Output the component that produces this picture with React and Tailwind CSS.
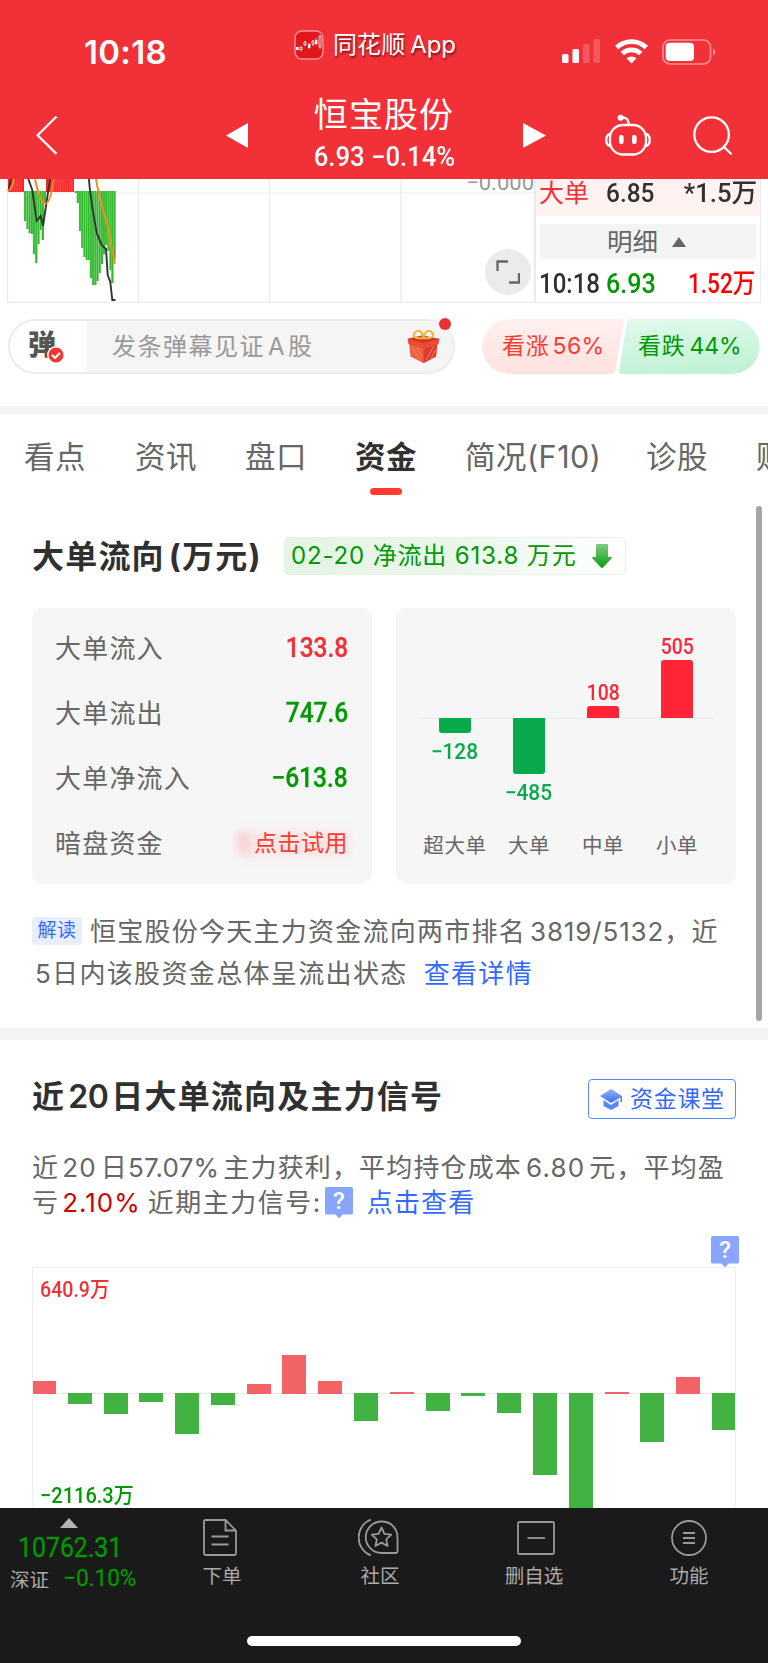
import { Fragment } from "react";

const ZERO_Y = 12;

// [x, bottom] of each histogram column, y is relative to the panel top
const MACD = [
  [24, 42], [26.3, 50], [28.5, 54], [30.7, 55], [32.9, 75], [35.1, 84],
  [37.3, 65], [39.5, 51], [41.6, 61], [43.6, 24],
  [74.6, 14], [76.7, 24], [78.9, 52], [81.1, 69], [83.3, 78], [85.5, 81],
  [87.6, 81], [89.8, 99], [92, 106], [94.2, 106], [96.3, 102], [98.5, 94],
  [100.7, 85], [102.8, 75], [105, 66], [107.2, 72], [109.3, 91], [111.2, 104],
  [113.3, 81],
];

const TABS = [
  { label: "看点", width: "w-[111px]" },
  { label: "资讯", width: "w-[110px]" },
  { label: "盘口", width: "w-[110px]" },
  { label: "资金", width: "w-[110px]", active: true },
  { label: "简况(F10)", width: "w-[181px]" },
  { label: "诊股", width: "w-[110px]" },
  { label: "财务", width: "w-[110px]" },
];

const FLOWS = [
  { label: "大单流入", value: "133.8", color: "text-[#f23037]" },
  { label: "大单流出", value: "747.6", color: "text-[#009900]" },
  { label: "大单净流入", value: "−613.8", color: "text-[#009900]" },
];

const ORDERS = [
  { label: "超大单", value: -128, height: 15 },
  { label: "大单", value: -485, height: 56 },
  { label: "中单", value: 108, height: 12 },
  { label: "小单", value: 505, height: 58 },
];

// signed bar heights in px, oldest day first
const DAYS = [
  13, -10, -20, -8, -40, -10.5, 10, 39, 13, -27, 2, -16.5, -1.5, -18.5,
  -80.5, -130, 2, -47.5, 17, -36,
];

function Num({ children, className = "" }) {
  return (
    <span
      className={`inline-block font-['Roboto','Noto_Sans_CJK_SC',sans-serif] font-medium whitespace-nowrap ${className}`}>
      {children}
    </span>
  );
}

function StatusBar() {
  return (
    <div className="flex h-[91px] items-center pt-[12px]">
      <span className="ml-[84px] w-[210px] text-[33px] font-semibold leading-[40px] tracking-[0.3px]">
        10:18
      </span>
      <div className="-mt-[13px] flex w-[268px] items-center">
        <svg width="30" height="30" viewBox="0 0 30 30" fill="none">
          <rect x="1" y="1" width="28" height="28" rx="7" fill="#e0181c" stroke="#fa9296" strokeWidth="1.4" />
          <path d="M7 16v5M11 11v5M15 13v6M19 10v6M22 8v7M26 5v14" stroke="#fff" strokeWidth="0.7" />
          <path d="M2 17h2.600v3H2zM14 14h2.400v4H14zM21 10h2.400v4H21z" fill="#fff" />
          <path d="M6 17h2v3H6zM10 12h2v3H10zM18 11h2v3H18zM25 6h2v11H25z" stroke="#fff" strokeWidth="0.8" fill="#e0181c" />
        </svg>
        <span className="ml-[9px] text-[24px] leading-[32px] tracking-[0.1px] whitespace-nowrap [text-shadow:1px_2px_2px_rgba(60,0,0,0.6)]">
          同花顺<span className="ml-[5px] tracking-[-0.200px]">App</span>
        </span>
      </div>
      <svg width="39" height="25" viewBox="0 0 39 25" fill="#fff">
        <rect x="0" y="15" width="6.500" height="9" rx="1.500" />
        <rect x="10.500" y="10" width="6.500" height="14" rx="1.500" />
        <rect x="21" y="5" width="6.500" height="19" rx="1.500" opacity="0.2" />
        <rect x="31.500" y="0" width="6.500" height="24" rx="1.500" opacity="0.2" />
      </svg>
      <svg className="ml-[14px]" width="33" height="25" viewBox="0 0 33 25" fill="none" stroke="#fff" strokeWidth="4.800">
        <path d="M1.700 8.500a21.500 21.500 0 0 1 29.600 0" />
        <path d="M7.200 14.600a13.400 13.400 0 0 1 18.600 0" />
        <path d="M16.500 24.500l-5-5.200a7.500 7.500 0 0 1 10 0z" fill="#fff" stroke="none" />
      </svg>
      <svg className="ml-[14px]" width="55" height="26" viewBox="0 0 55 26" fill="none">
        <rect x="1" y="1" width="47.500" height="24" rx="7" stroke="#f98e92" strokeWidth="1.700" />
        <rect x="3.700" y="3.800" width="28.300" height="18.300" rx="4" fill="#fff" />
        <path d="M51 9.500c3 1.500 3 5.500 0 7z" fill="#f98e92" />
      </svg>
    </div>
  );
}

function NavBar() {
  return (
    <div className="flex h-[88px] items-center pl-[36px]">
      <svg width="22" height="40" viewBox="0 0 22 40" fill="none" stroke="#fff" strokeWidth="2.200">
        <path d="M20.500 1.500L1.600 20.200l18.900 18.700" />
      </svg>
      <svg className="ml-[168px]" width="22" height="25" viewBox="0 0 22 25" fill="#fff">
        <path d="M22 0v25L0 12.500z" />
      </svg>
      <div className="flex w-[275px] flex-col items-center">
        <div className="mr-[3px] text-[34px] leading-[44px] tracking-[1.100px]">恒宝股份</div>
        <Num className="mr-[3px] text-[27px] leading-[40px] scale-x-[0.950]">6.93 −0.14%</Num>
      </div>
      <svg width="23" height="25" viewBox="0 0 23 25" fill="#fff">
        <path d="M0 0v25l23-12.500z" />
      </svg>
      <svg className="ml-[59px]" width="46" height="43" viewBox="0 0 46 43" fill="none" stroke="#fff" strokeWidth="2.300">
        <rect x="5" y="11" width="36" height="29.500" rx="13" />
        <path d="M5 20c-5 1-5 11 0 12M41 20c5 1 5 11 0 12" />
        <path d="M16 3.800c4.500-.8 7.500 1 7.700 6.500" />
        <circle cx="15.600" cy="3.800" r="3" fill="#fff" stroke="none" />
        <rect x="14" y="21" width="4.600" height="9" rx="2" fill="#fff" stroke="none" />
        <rect x="27" y="21" width="4.600" height="9" rx="2" fill="#fff" stroke="none" />
      </svg>
      <svg className="ml-[42px]" width="40" height="41" viewBox="0 0 40 41" fill="none" stroke="#fff" strokeWidth="2.300">
        <circle cx="18.600" cy="19.600" r="17.300" />
        <path d="M31 32l7.500 7.300" />
      </svg>
    </div>
  );
}

function MinuteChart() {
  return (
    <div className="relative h-[124px] w-[534px] overflow-hidden">
      <svg width="534" height="124" viewBox="0 0 534 124" fill="none">
        <path d="M7.500 0v123M138.500 0v123M269.500 0v123M401 0v123M7 14H534M7 123.300H534" stroke="#ebebeb" strokeWidth="1.200" />
        <rect x="8" y="0" width="16" height="13" fill="#ff2222" />
        <rect x="46" y="0" width="28" height="13" fill="#ff2222" />
        <path d="M10 0v13M12.300 0v13M14.600 0v13M17 0v13M19.300 0v13M21.600 0v13M49 0v13M51.300 0v13M53.600 0v13M56 0v13M58.300 0v13M60.600 0v13M63 0v13M65.300 0v13M67.600 0v13M70 0v13M72 0v13" stroke="#fff" strokeWidth="0.500" opacity="0.450" />
        {MACD.map(([x, y]) => (
          <Fragment key={x}>
            <rect x={x} y={ZERO_Y} width="2.300" height={y - ZERO_Y} fill="#2fb82c" />
            <path d={`M${x} ${ZERO_Y}V${y}`} stroke="#fff" strokeWidth="0.500" opacity="0.400" />
          </Fragment>
        ))}
        <path d="M8.500 12L11 0M28.300 0L32.300 11L36.700 42L40.700 37L43 47L50 0M89 0C90 18 94 38 96.700 54L101.700 66L106 70L107.700 96L110.300 103L112.300 121H115.500" stroke="#333" strokeWidth="1.900" />
        <path d="M8 12c4-2 5-8 6-12M35 0c2 10 6 24 10 24.500S52 13 54 0M96 0c2 14 7 30 10 41s6 30 9 44" stroke="#ff861f" strokeWidth="1.900" />
      </svg>
      <Num className="absolute right-0 -top-[9px] w-[68px] text-right text-[22px] leading-[26px] font-normal text-[#999]">
        −0.000
      </Num>
      <div className="absolute top-[70px] left-[485px] flex size-[46px] items-center justify-center rounded-full bg-[#ebebeb]">
        <svg width="24" height="24" viewBox="0 0 24 24" fill="none" stroke="#666" strokeWidth="2.300">
          <path d="M1.500 11V1.500H12M23 13v9.500H13" />
        </svg>
      </div>
    </div>
  );
}

function TradeList() {
  return (
    <div className="h-[124px] w-[227px] border-r border-b border-l-2 border-[#ebebeb]">
      <div className="flex h-[37px] items-center bg-[#fff3f2] pb-[10px] pl-[3px] text-[26px] leading-[26px]">
        <span className="w-[67px] text-[25px] text-[#f23037]">大单</span>
        <Num className="w-[60px] origin-left scale-x-[0.940] text-[#303030]">6.85</Num>
        <Num className="ml-auto mr-[3px] origin-right scale-x-[0.990] text-[#303030]">*1.5万</Num>
      </div>
      <div className="mx-[4px] mt-[8px] flex h-[35px] items-center justify-center bg-[#f4f4f4] pr-[3px] text-[25.500px] leading-[30px] text-[#666]">
        明细
        <svg className="ml-[14px]" width="14" height="10" viewBox="0 0 14 10" fill="#666">
          <path d="M7 0l7 10H0z" />
        </svg>
      </div>
      <div className="mt-[8px] flex h-[34px] items-center pl-[3px] text-[27px] leading-[34px]">
        <Num className="w-[67px] origin-left scale-x-[0.890] text-[#303030]">10:18</Num>
        <Num className="w-[60px] origin-left scale-x-[0.930] text-[#009900]">6.93</Num>
        <Num className="ml-auto mr-[4px] origin-right scale-x-[0.840] text-[#ff0000]">1.52万</Num>
      </div>
    </div>
  );
}

function Gift() {
  return (
    <svg width="33" height="35" viewBox="0 0 33 35" fill="none">
      <path d="M2 13.500l14.500 4.500 14-4.500-1.500 14-12.500 6.500L3.500 27.500z" fill="#f0603f" />
      <path d="M16.500 18l14-4.500-1.500 14-12.500 6.500z" fill="#dd3b2f" />
      <path d="M5 18l8 13M10 19l6 9M19 31l8-14M24 29.500l5-9" stroke="#f98a64" strokeWidth="0.900" />
      <path d="M.5 10L15 6.500 32.500 10l-1 5-15 4.500-15-4.500z" fill="#ec4c31" />
      <path d="M.5 10L15 6.500 32.500 10l-16 4z" fill="#cf3727" />
      <path d="M16 9C7 10 5 7 8 3.500 11 0 16 2 16 9zM17 9c9 1 11-2 8-5.500C22 0 17 2 17 9z" stroke="#f4b13b" strokeWidth="2" />
    </svg>
  );
}

function DanmakuBar() {
  return (
    <div className="flex h-[103px] pt-[16px] pl-[8px]">
      <div className="relative flex h-[55px] w-[447px] items-center rounded-full border-2 border-[#ececec] bg-[#f5f5f5]">
        <div className="relative h-full w-[77px] rounded-l-full bg-white">
          <span className="absolute top-[7px] left-[18px] text-[28px] leading-[34px] font-black text-[#555]">
            弹
          </span>
          <svg className="absolute top-[25px] left-[37px]" width="18" height="18" viewBox="0 0 18 18" fill="none">
            <circle cx="9" cy="9" r="8.200" fill="#f9332e" stroke="#fff" strokeWidth="1.400" />
            <path d="M5 9l3 3 5-5.200" stroke="#fff" strokeWidth="2.200" />
          </svg>
        </div>
        <span className="ml-[25px] text-[24px] leading-[34px] tracking-[1.500px] text-[#999] whitespace-nowrap">
          发条弹幕见证<span className="mr-[2px] ml-[3px]">A</span>股
        </span>
        <div className="ml-auto mr-[13px]">
          <Gift />
        </div>
        <span className="absolute -top-[3px] right-[2px] size-[12px] rounded-full bg-[#eb2f33]" />
      </div>
      <div className="relative ml-[27px] flex h-[55px] w-[278px] items-center text-[23px] tracking-[0.800px]">
        <svg className="absolute inset-0" width="278" height="55" viewBox="0 0 279 55">
          <defs>
            <linearGradient id="up" x1="0" y1="0" x2="0" y2="1">
              <stop offset="0" stopColor="#fff1f0" />
              <stop offset="1" stopColor="#ffe2de" />
            </linearGradient>
            <linearGradient id="down" x1="0" y1="0" x2="0.200" y2="1">
              <stop offset="0" stopColor="#e2f9ec" />
              <stop offset="1" stopColor="#c2f2d6" />
            </linearGradient>
          </defs>
          <path d="M27.500 0H139q4 0 3.300 4l-8.500 47q-.8 4-4.800 4H27.500a27.500 27.500 0 0 1 0-55z" fill="url(#up)" />
          <path d="M149.500 0H251a27.500 27.500 0 0 1 0 55H141q-4 0-3.300-4l7.500-47q.8-4 4.300-4z" fill="url(#down)" />
        </svg>
        <span className="relative ml-[20px] w-[136px] whitespace-nowrap text-[#ff3b30]">
          看涨<span className="ml-[3px] tracking-[0.300px]">56%</span>
        </span>
        <span className="relative whitespace-nowrap text-[#009900]">
          看跌<span className="ml-[4px] tracking-[-0.200px]">44%</span>
        </span>
      </div>
    </div>
  );
}

function Tabs() {
  return (
    <div className="flex h-[87px] overflow-hidden pl-[24px] text-[30.500px] tracking-[0.500px] text-[#666]">
      {TABS.map((tab) => (
        <div key={tab.label} className={`shrink-0 pt-[23px] whitespace-nowrap ${tab.width}`}>
          <div className={tab.active ? "leading-[40px] font-bold text-[#303030]" : "leading-[40px]"}>
            {tab.label}
          </div>
          {tab.active && <div className="mt-[11px] ml-[15px] h-[7px] w-[32px] rounded-full bg-[#ff3b30]" />}
        </div>
      ))}
    </div>
  );
}

function FlowCard() {
  return (
    <div className="h-[276px] w-[340px] rounded-[11px] bg-[#f6f6f6] px-[24px] pt-[8px]">
      {FLOWS.map((row) => (
        <div key={row.label} className="flex h-[65px] items-center justify-between leading-[40px]">
          <span className="-ml-px text-[26px] tracking-[1.200px] text-[#666]">{row.label}</span>
          <Num className={`origin-right scale-x-[0.890] text-[27.500px] -mt-[2px] [-webkit-text-stroke:0.300px] ${row.color}`}>{row.value}</Num>
        </div>
      ))}
      <div className="flex h-[65px] items-center justify-between leading-[40px]">
        <span className="-ml-px text-[26px] tracking-[1.200px] text-[#666]">暗盘资金</span>
        <div className="relative">
          <div className="absolute inset-y-[8px] -right-[2px] -left-[10px] bg-[#ff3b30]/8 blur-[6px]" />
          <div className="absolute top-[9px] -left-[17px] h-[22px] w-[11px] bg-[#ff3b30]/18 blur-[4px]" />
          <span className="relative text-[23px] tracking-[0.500px] text-[#ff3b30]">点击试用</span>
        </div>
      </div>
    </div>
  );
}

function OrderCard() {
  return (
    <div className="h-[276px] w-[340px] rounded-[11px] bg-[#f6f6f6] pt-[24px]">
      <div className="relative flex h-[186px] justify-center">
        <div className="absolute top-[86px] right-[23px] left-[24px] h-px bg-[#ebebeb]" />
        {ORDERS.map((o) => {
          const up = o.value > 0;
          return (
            <div key={o.label} className="relative flex w-[74px] flex-col items-center">
              <div className="flex h-[86px] flex-col items-center justify-end">
                {up && (
                  <>
                    <Num className="scale-x-[0.900] text-[21.500px] leading-[27px] text-[#ff2436]">{o.value}</Num>
                    <div className="w-[32px] rounded-t-[3px] bg-[#ff2436]" style={{ height: o.height }} />
                  </>
                )}
              </div>
              {!up && (
                <>
                  <div className="w-[32px] rounded-b-[3px] bg-[#09aa4b]" style={{ height: o.height }} />
                  <Num className="mt-[5px] mr-[2px] scale-x-[0.970] text-[21.500px] leading-[27px] text-[#09aa4b]">
                    −{Math.abs(o.value)}
                  </Num>
                </>
              )}
            </div>
          );
        })}
      </div>
      <div className="flex justify-center text-[20.500px] leading-[56px] tracking-[0.600px] text-[#666]">
        {ORDERS.map((o) => (
          <span key={o.label} className="w-[74px] text-center whitespace-nowrap">
            {o.label}
          </span>
        ))}
      </div>
    </div>
  );
}

function Help({ className = "" }) {
  return (
    <span className={`relative inline-block h-[32px] w-[28px] ${className}`}>
      <svg className="absolute inset-0" width="28" height="32" viewBox="0 0 28 32" fill="#89a5ff">
        <path d="M1.500 0h25Q28 0 28 1.500v24.500Q28 27.500 26.500 27.500H17.500L14 31.500l-3.500-4H1.500Q0 27.500 0 26V1.500Q0 0 1.500 0z" />
      </svg>
      <span className="absolute inset-x-0 top-0 text-center font-['Roboto'] text-[24px] leading-[29px] font-medium tracking-normal text-white">
        ?
      </span>
    </span>
  );
}

function BigOrderFlow() {
  return (
    <section className="h-[527px]">
      <div className="flex h-[107px] items-center pt-[3px] pl-[32px]">
        <h2 className="w-[252px] pt-[2px] text-[32px] font-bold leading-[40px] tracking-[1.200px] whitespace-nowrap text-[#303030]">
          大单流向<span className="ml-[4px]">(万元)</span>
        </h2>
        <div className="flex h-[38px] w-[342px] items-center rounded-[4px] border border-[#e5f6e6] bg-linear-to-r from-[#e5f4e5] via-[#ebf6eb] to-white pl-[6px] text-[24px] leading-[34px] tracking-[0.850px] whitespace-nowrap text-[#009900]">
          02-20 净流出 613.8 万元
          <svg className="ml-[15px]" width="20" height="24" viewBox="0 0 20 24">
            <defs>
              <linearGradient id="arrow" x1="0" y1="0" x2="0" y2="1">
                <stop offset="0" stopColor="#7fcf80" />
                <stop offset="1" stopColor="#0d9b10" />
              </linearGradient>
            </defs>
            <path d="M5 0h10q1 0 1 1v12h3q1.500.5.500 1.500l-8.500 9q-1 .8-2 0l-8.500-9q-1-1 .5-1.500h3V1q0-1 1-1z" fill="url(#arrow)" />
          </svg>
        </div>
      </div>
      <div className="flex gap-[24px] pl-[32px]">
        <FlowCard />
        <OrderCard />
      </div>
      <div className="mt-[26px] pl-[32px] text-[26px] tracking-[1.250px] whitespace-nowrap text-[#666]">
        <div className="flex h-[42px] items-center">
          <span className="flex h-[28px] w-[50px] items-center justify-center rounded-[4px] bg-[#e9eeff] text-[19px] tracking-[0.500px] text-[#3469ff]">
            解读
          </span>
          <span className="ml-[8px]">
            恒宝股份今天主力资金流向两市排名<span className="ml-[4px] tracking-[0.850px]">3819/5132</span>，近
          </span>
        </div>
        <div className="flex h-[42px] items-center pl-[3px]">
          <span>
            5<span className="tracking-[1.350px]">日内该股资金总体呈流出状态</span>
          </span>
          <span className="ml-[16px] tracking-[1.350px] text-[#3469ff]">查看详情</span>
        </div>
      </div>
    </section>
  );
}

function DailyChart() {
  return (
    <div className="relative ml-[32px] h-[241px] w-[704px] overflow-hidden border-x border-t border-[#efefef]">
      <div className="absolute inset-x-0 top-[125px] h-px bg-[#ebebeb]" />
      <div className="relative -mx-px flex h-full justify-between">
        {DAYS.map((h, i) => (
          <div key={i} className="flex h-full w-[24px] flex-col">
            <div className="flex h-[126px] shrink-0 flex-col justify-end">
              {h > 0 && <div className="bg-[#f16365]" style={{ height: h }} />}
            </div>
            {h < 0 && <div className="-mt-px shrink-0 bg-[#42b342]" style={{ height: -h + 1 }} />}
          </div>
        ))}
      </div>
      <Num className="absolute top-[9px] left-[7px] origin-left scale-x-[0.890] text-[22px] leading-[26px] text-[#f23037]">
        640.9万
      </Num>
      <Num className="absolute top-[215px] left-[7px] origin-left scale-x-[0.910] text-[22px] leading-[26px] text-[#009900]">
        −2116.3万
      </Num>
    </div>
  );
}

function MainSignal() {
  return (
    <section>
      <div className="flex h-[98px] items-center justify-between pt-[20px] pr-[32px] pl-[32px]">
        <h2 className="-mt-[4px] text-[32px] font-bold leading-[40px] tracking-[1.200px] whitespace-nowrap text-[#303030]">
          近<span className="mx-[3px] font-semibold tracking-[-0.500px]">20</span>日大单流向及主力信号
        </h2>
        <div className="flex h-[40px] w-[148px] items-center rounded-[4px] border border-[#5f88ff] pl-[11px] text-[23px] leading-[34px] tracking-[0.700px] text-[#3469ff]">
          <svg className="mr-[8px]" width="22" height="21" viewBox="0 0 22 21">
            <defs>
              <linearGradient id="cap" x1="0" y1="0" x2="0" y2="1">
                <stop offset="0" stopColor="#93b1fd" />
                <stop offset="1" stopColor="#3c6ff8" />
              </linearGradient>
            </defs>
            <path d="M11 0l11 7v6h-1.500V8.500L11 14 0 7z" fill="url(#cap)" />
            <path d="M3.500 11l7.500 5 7.500-5v6L11 21l-7.500-4z" fill="#5a87fb" />
          </svg>
          资金课堂
        </div>
      </div>
      <div className="mt-[12px] pl-[32px] text-[26px] tracking-[1.150px] whitespace-nowrap text-[#666]">
        <div className="h-[35px] leading-[36px]">
          近<span className="mr-[4px] ml-[3px]">20</span>日<span className="mr-[4px] tracking-[0.200px]">57.07%</span>
          主力获利，平均持仓成本<span className="mx-[4px]">6.80</span>元，平均盈
        </div>
        <div className="flex h-[36px] items-center leading-[36px]">
          亏<span className="ml-[3px] tracking-[1px] text-[#cc0000]">2.10%</span>
          <span className="ml-[7px] tracking-[1.500px]">近期主力信号:</span>
          <Help className="ml-[3px]" />
          <span className="ml-[14px] text-[#3469ff]">点击查看</span>
        </div>
      </div>
      <div className="flex h-[46px] items-end justify-end pr-[29px]">
        <Help className="-mb-px" />
      </div>
      <DailyChart />
    </section>
  );
}

function BottomBar() {
  return (
    <footer className="flex h-[155px] flex-col bg-[#1a1a1a] text-[19.500px] text-[#aaa]">
      <div className="flex h-[100px]">
        <div className="flex w-[144px] flex-col pt-[10px]">
          <svg className="ml-[60px]" width="18" height="10" viewBox="0 0 18 10" fill="#b3b3b3">
            <path d="M9 0l9 10H0z" />
          </svg>
          <Num className="ml-[18px] origin-left scale-x-[0.920] text-[27px] leading-[40px] text-[#009900] font-normal [-webkit-text-stroke:0.400px]">
            10762.31
          </Num>
          <div className="flex items-center pl-[10px] leading-[24px]">
            <span className="w-[53px]">深证</span>
            <Num className="-mt-[2px] origin-left scale-x-[0.980] text-[23px] text-[#009900] font-normal [-webkit-text-stroke:0.300px]">
              −0.10%
            </Num>
          </div>
        </div>
        <div className="flex w-[156px] flex-col items-center">
          <svg className="mt-[11px] mr-[4px]" width="34" height="37" viewBox="0 0 34 37" fill="none" stroke="#999" strokeWidth="1.800">
            <path d="M22.500 1H2.500Q1 1 1 2.500v32Q1 36 2.500 36h29q1.500 0 1.500-1.500V11.500zM22.500 1v10.500H33M8.500 17.500h17M8.500 25.500h17" />
          </svg>
          <span className="mt-[8px] leading-[24px]">下单</span>
        </div>
        <div className="flex w-[156px] flex-col items-center pl-[4px]">
          <svg className="mt-[10px] mr-[2px]" width="42" height="39" viewBox="0 0 42 39" fill="none" stroke="#999" strokeWidth="1.800">
            <path d="M13 1.500C-3.500 8-3.500 31 13 37.500" />
            <path d="M23.500 3.500c10 0 16 7.500 16 16v14q0 1.500-1.500 1.500H23.500a15.700 15.700 0 0 1 0-31.500z" />
            <path d="M23.500 9.500l2.900 6.300 6.800.8-5 4.700 1.300 6.700-6-3.400-6 3.400 1.300-6.700-5-4.700 6.800-.8z" strokeLinejoin="round" />
          </svg>
          <span className="mt-[7px] leading-[24px]">社区</span>
        </div>
        <div className="flex w-[156px] flex-col items-center">
          <svg className="mt-[13px] ml-[3px]" width="38" height="34" viewBox="0 0 38 34" fill="none" stroke="#999" strokeWidth="1.800">
            <rect x="1" y="1" width="36" height="32" rx="1.500" />
            <path d="M10.500 17h17.500" />
          </svg>
          <span className="mt-[9px] leading-[24px]">删自选</span>
        </div>
        <div className="flex w-[156px] flex-col items-center pr-[2px]">
          <svg className="mt-[12px]" width="36" height="36" viewBox="0 0 36 36" fill="none" stroke="#999" strokeWidth="1.800">
            <circle cx="18" cy="18" r="17" />
            <path d="M12 13h12M12 18h12M12 23h12" />
          </svg>
          <span className="mt-[8px] leading-[24px]">功能</span>
        </div>
      </div>
      <div className="mt-[28px] ml-[247px] h-[10px] w-[274px] rounded-full bg-white" />
    </footer>
  );
}

export default function App() {
  return (
    <div className="relative h-[1663px] w-[768px] overflow-hidden bg-white font-['Inter','Noto_Sans_CJK_SC',sans-serif]">
      <header className="h-[179px] bg-[#f23037] text-white">
        <StatusBar />
        <NavBar />
      </header>
      <div className="flex">
        <MinuteChart />
        <TradeList />
      </div>
      <DanmakuBar />
      <div className="h-[8px] bg-[#f4f4f4]" />
      <Tabs />
      <BigOrderFlow />
      <div className="h-[12px] bg-[#f4f4f4]" />
      <MainSignal />
      <BottomBar />
      {/* Scroll indicator */}
      <div className="absolute top-[506px] left-[756px] h-[515px] w-[6px] rounded-full bg-[#a5a5a5]" />
    </div>
  );
}
